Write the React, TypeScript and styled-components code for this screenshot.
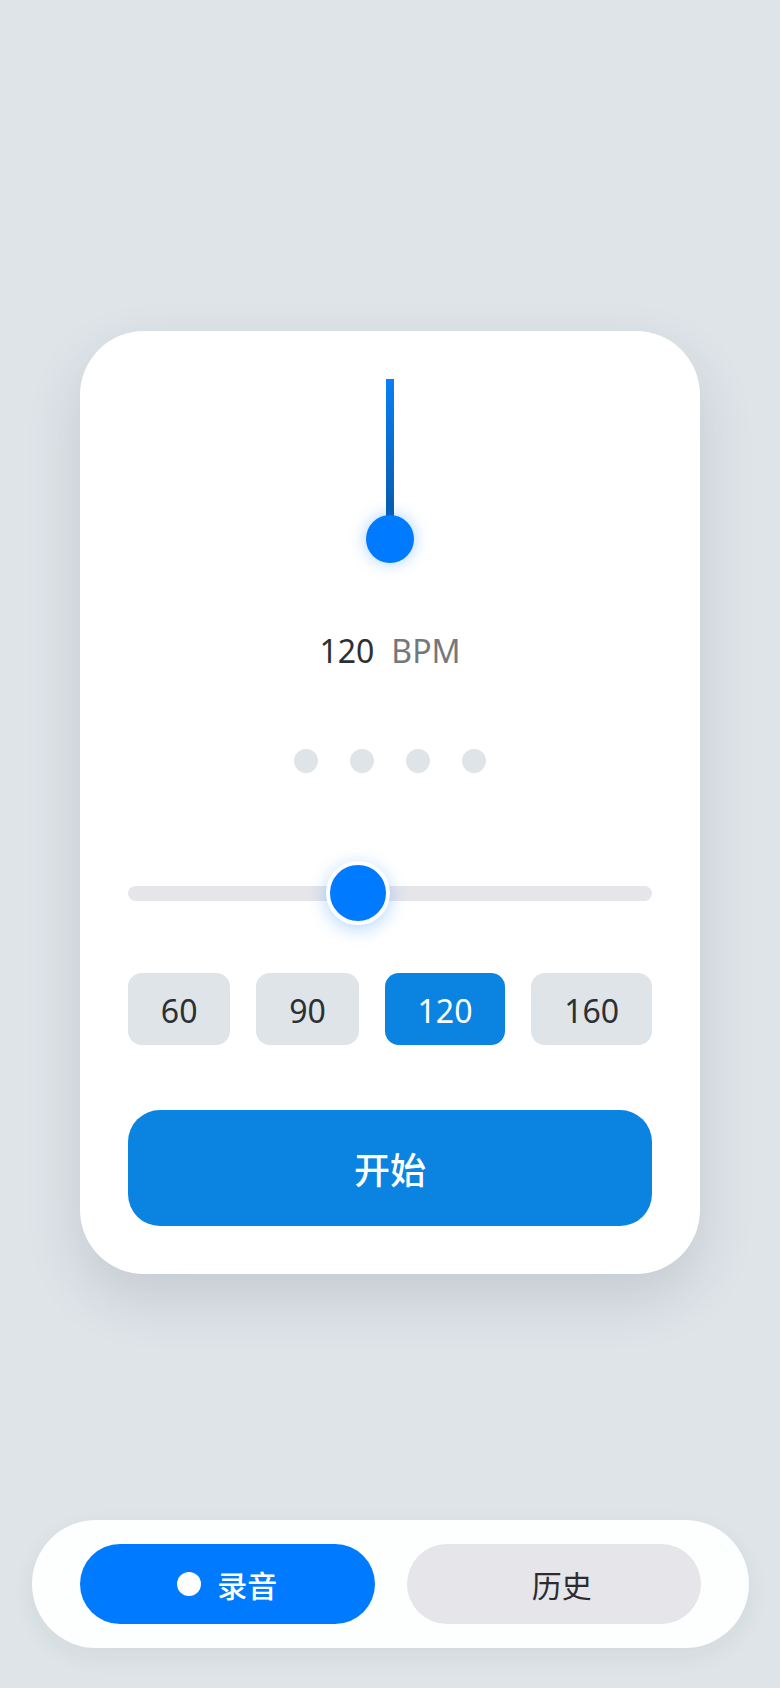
import React from "react";
import styled, { createGlobalStyle } from "styled-components";

const GlobalStyle = createGlobalStyle`
  html, body { margin: 0; padding: 0; background: #dee4e8; }
  body { font-family: "Noto Sans", "Noto Sans CJK SC", sans-serif; }
  * { box-sizing: border-box; }
`;

const Page = styled.div`
  min-height: 1688px;
  display: flex;
  flex-direction: column;
  background: #dee4e8;
`;

const Main = styled.main`
  padding: 331px 80px 0;
  display: flex;
  justify-content: center;
`;

const Card = styled.section`
  width: 620px;
  background: #ffffff;
  border-radius: 64px;
  padding: 48px;
  display: flex;
  flex-direction: column;
  align-items: stretch;
  box-shadow: 0 24px 56px rgba(40, 60, 70, 0.14);
`;

const PendulumArea = styled.div`
  height: 184px;
  display: flex;
  justify-content: center;
`;

const Pendulum = styled.div`
  width: 48px;
  height: 184px;
  display: flex;
  flex-direction: column;
  align-items: center;
  transform-origin: 50% 0;
`;

const Rod = styled.div`
  width: 8px;
  height: 146px;
  background: linear-gradient(to bottom, #0a7ff6, #0759a6);
  margin-bottom: -10px;
`;

const Bob = styled.div`
  width: 48px;
  height: 48px;
  border-radius: 50%;
  background: #007aff;
  box-shadow: 0 0 16px rgba(0, 122, 255, 0.35);
  position: relative;
`;

const Readout = styled.div`
  margin-top: 68px;
  display: flex;
  justify-content: center;
  align-items: baseline;
  gap: 17px;
  font-size: 32px;
  line-height: 40px;
`;

const Value = styled.span`
  color: #2c3033;
`;

const Unit = styled.span`
  color: #74787b;
`;

const Beats = styled.div`
  margin-top: 78px;
  display: flex;
  justify-content: center;
  gap: 32px;
`;

const Beat = styled.span<{ $on?: boolean }>`
  width: 24px;
  height: 24px;
  border-radius: 50%;
  background: ${(p) => (p.$on ? "#007aff" : "#dee4e8")};
`;

const Slider = styled.div`
  margin-top: 88px;
  height: 64px;
  display: flex;
  align-items: center;
  position: relative;
`;

const Track = styled.div`
  flex: 1;
  height: 15px;
  border-radius: 8px;
  background: #e5e5ea;
`;

const Thumb = styled.div`
  position: absolute;
  top: 0;
  width: 64px;
  height: 64px;
  margin-left: -32px;
  border-radius: 50%;
  background: #007aff;
  border: 4px solid #ffffff;
  box-shadow: 0 4px 18px rgba(0, 122, 255, 0.3);
`;

const Presets = styled.div`
  margin-top: 48px;
  display: flex;
  gap: 26px;
`;

const Preset = styled.button<{ $active?: boolean }>`
  flex: 1 1 auto;
  height: 72px;
  border: none;
  padding: 4px 0 0;
  border-radius: 14px;
  font-family: "Noto Sans", sans-serif;
  font-size: 32px;
  line-height: 40px;
  background: ${(p) => (p.$active ? "#0a84e0" : "#dee4e8")};
  color: ${(p) => (p.$active ? "#ffffff" : "#2c3033")};
`;

const StartButton = styled.button`
  margin-top: 65px;
  height: 116px;
  border: none;
  border-radius: 32px;
  background: #0a84e0;
  color: #ffffff;
  font-family: "Noto Sans CJK SC", sans-serif;
  font-size: 36px;
  font-weight: 500;
`;

const Nav = styled.nav`
  margin: auto 31px 40px 32px;
  height: 128px;
  border-radius: 64px;
  background: #fdfefe;
  padding: 24px 48px;
  display: flex;
  gap: 32px;
  box-shadow: 0 8px 24px rgba(40, 60, 70, 0.06);
`;

const Tab = styled.button<{ $active?: boolean }>`
  flex: 1;
  height: 80px;
  border: none;
  border-radius: 40px;
  display: flex;
  align-items: center;
  justify-content: center;
  gap: 16px;
  font-family: "Noto Sans CJK SC", sans-serif;
  font-size: 30px;
  font-weight: ${(p) => (p.$active ? 500 : 400)};
  background: ${(p) => (p.$active ? "#007aff" : "#e5e5ea")};
  color: ${(p) => (p.$active ? "#ffffff" : "#2c2c2e")};
`;

const TabDot = styled.span<{ $visible?: boolean }>`
  width: ${(p) => (p.$visible ? "24px" : "0")};
  height: 24px;
  border-radius: 50%;
  background: #ffffff;
`;

const presets = [60, 90, 120, 160];
const bpm = 120;
const thumbPos = 43.8;

export default function App() {
  return (
    <Page>
      <GlobalStyle />
      <Main>
        <Card>
          <PendulumArea>
            <Pendulum>
              <Rod />
              <Bob />
            </Pendulum>
          </PendulumArea>
          <Readout>
            <Value>{bpm}</Value>
            <Unit>BPM</Unit>
          </Readout>
          <Beats>
            {[0, 1, 2, 3].map((i) => (
              <Beat key={i} />
            ))}
          </Beats>
          <Slider>
            <Track />
            <Thumb style={{ left: `${thumbPos}%` }} />
          </Slider>
          <Presets>
            {presets.map((p) => (
              <Preset key={p} $active={p === bpm}>
                {p}
              </Preset>
            ))}
          </Presets>
          <StartButton>开始</StartButton>
        </Card>
      </Main>
      <Nav>
        <Tab $active>
          <TabDot $visible />
          录音
        </Tab>
        <Tab>
          <TabDot />
          历史
        </Tab>
      </Nav>
    </Page>
  );
}
